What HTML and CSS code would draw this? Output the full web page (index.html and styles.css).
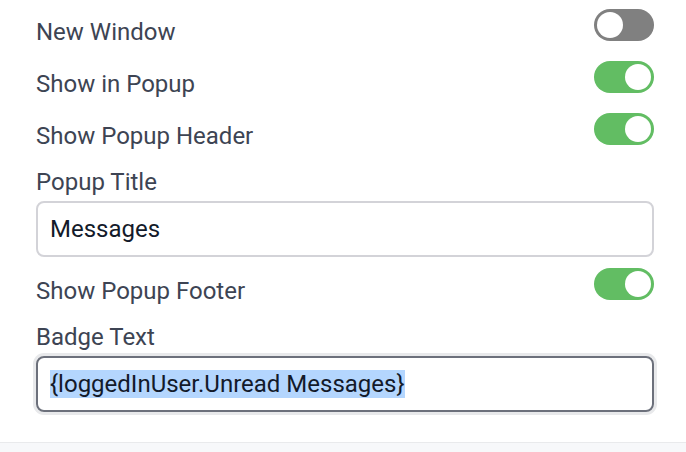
FILE: index.html
```html
<!DOCTYPE html>
<html lang="en">
<head>
<meta charset="utf-8">
<title>Popup Settings</title>
<link rel="stylesheet" href="styles.css">
</head>
<body>
<div class="panel">
  <div class="toggle-row">
    <span class="label">New Window</span>
    <span class="switch"><span class="knob"></span></span>
  </div>
  <div class="toggle-row">
    <span class="label">Show in Popup</span>
    <span class="switch on"><span class="knob"></span></span>
  </div>
  <div class="toggle-row">
    <span class="label">Show Popup Header</span>
    <span class="switch on"><span class="knob"></span></span>
  </div>
  <div class="field">
    <span class="field-label">Popup Title</span>
    <div class="input">Messages</div>
  </div>
  <div class="toggle-row">
    <span class="label">Show Popup Footer</span>
    <span class="switch on"><span class="knob"></span></span>
  </div>
  <div class="field">
    <span class="field-label">Badge Text</span>
    <div class="input focused"><span class="selected">{loggedInUser.Unread Messages}</span></div>
  </div>
</div>
<div class="footer"></div>
</body>
</html>
```

FILE: styles.css
```css
* { box-sizing: border-box; }
html, body { margin: 0; padding: 0; background: #ffffff; }
body {
  font-family: Roboto, "Liberation Sans", sans-serif;
  font-size: 24px;
  color: #3d4453;
  height: 452px;
  overflow: hidden;
}
.panel {
  padding: 9px 32px 0 36px;
  height: 442px;
}
.toggle-row {
  display: flex;
  justify-content: space-between;
  align-items: flex-start;
  height: 52px;
}
.label {
  line-height: 28px;
  margin-top: 9px;
}
.switch {
  width: 60px;
  height: 32px;
  border-radius: 16px;
  background: #808080;
  padding: 3px;
  display: flex;
  justify-content: flex-start;
}
.switch.on {
  background: #62bd63;
  justify-content: flex-end;
}
.knob {
  width: 26px;
  height: 26px;
  border-radius: 50%;
  background: #ffffff;
}
.field {
  display: flex;
  flex-direction: column;
  margin-top: 3px;
  margin-bottom: 11px;
}
.field-label {
  line-height: 28px;
  margin-bottom: 5px;
}
.input {
  height: 56px;
  border: 2px solid #d3d3d8;
  border-radius: 8px;
  padding: 0 12px;
  display: flex;
  align-items: center;
  color: #131a2a;
  line-height: 28px;
}
.input.focused {
  border-color: #6c707b;
  box-shadow: 0 0 0 3px #e8e9eb;
}
.selected {
  background: #b4d6fe;
}
.footer {
  height: 10px;
  border-top: 1px solid #e9eaec;
  background: #f7f8fa;
}
```
